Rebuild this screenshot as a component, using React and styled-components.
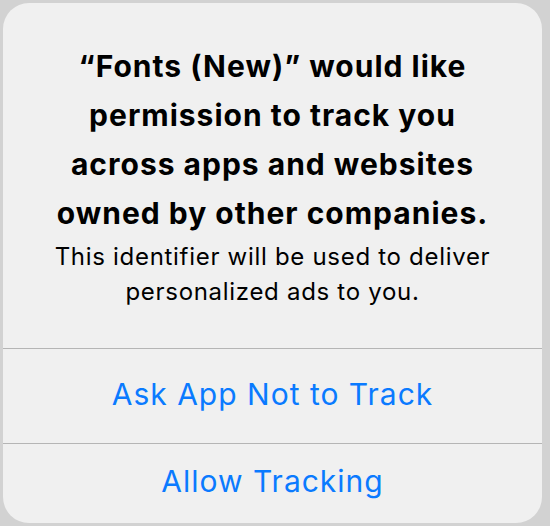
import styled, { createGlobalStyle } from 'styled-components';

const GlobalStyle = createGlobalStyle`
    html, body {
        margin: 0;
        padding: 0;
        background: #d2d2d2;
    }
    body {
        font-family: Inter, 'Noto Sans', 'Liberation Sans', sans-serif;
        -webkit-font-smoothing: antialiased;
    }
`;

export default function App() {
    return (
        <>
            <GlobalStyle />
            <StyledScreen>
                <StyledAlert>
                    <StyledContent>
                        <StyledTitle>
                            “Fonts (New)” would like
                            <br />
                            permission to track you
                            <br />
                            across apps and websites
                            <br />
                            owned by other companies.
                        </StyledTitle>
                        <StyledMessage>
                            This identifier will be used to deliver
                            <br />
                            personalized ads to you.
                        </StyledMessage>
                    </StyledContent>
                    <StyledButton $height={95}>Ask App Not to Track</StyledButton>
                    <StyledButton $height={80}>Allow Tracking</StyledButton>
                </StyledAlert>
            </StyledScreen>
        </>
    );
}

const StyledScreen = styled.div`
    width: 550px;
    height: 526px;
    padding: 3px 0 0 3px;
    box-sizing: border-box;
`;

const StyledAlert = styled.div`
    width: 539px;
    height: 520px;
    border-radius: 26px;
    background: #f0f0f0;
    display: flex;
    flex-direction: column;
    overflow: hidden;
`;

const StyledContent = styled.div`
    padding: 39px 0 39px;
    display: flex;
    flex-direction: column;
    align-items: center;
    text-align: center;
    color: #000;
`;

const StyledTitle = styled.div`
    font-size: 30px;
    line-height: 49px;
    font-weight: 700;
    letter-spacing: 1px;
    white-space: nowrap;
`;

const StyledMessage = styled.div`
    font-size: 24px;
    line-height: 35px;
    font-weight: 400;
    letter-spacing: 0.7px;
    white-space: nowrap;
    margin-top: 1px;
`;

const StyledButton = styled.button`
    height: ${({ $height }) => $height}px;
    flex-shrink: 0;
    border: none;
    border-top: 1px solid #b5b5b5;
    background: transparent;
    padding: 0 0 5px;
    font-family: inherit;
    font-size: 30px;
    font-weight: 400;
    letter-spacing: 1px;
    color: #0a7aff;
    display: flex;
    align-items: center;
    justify-content: center;
`;
